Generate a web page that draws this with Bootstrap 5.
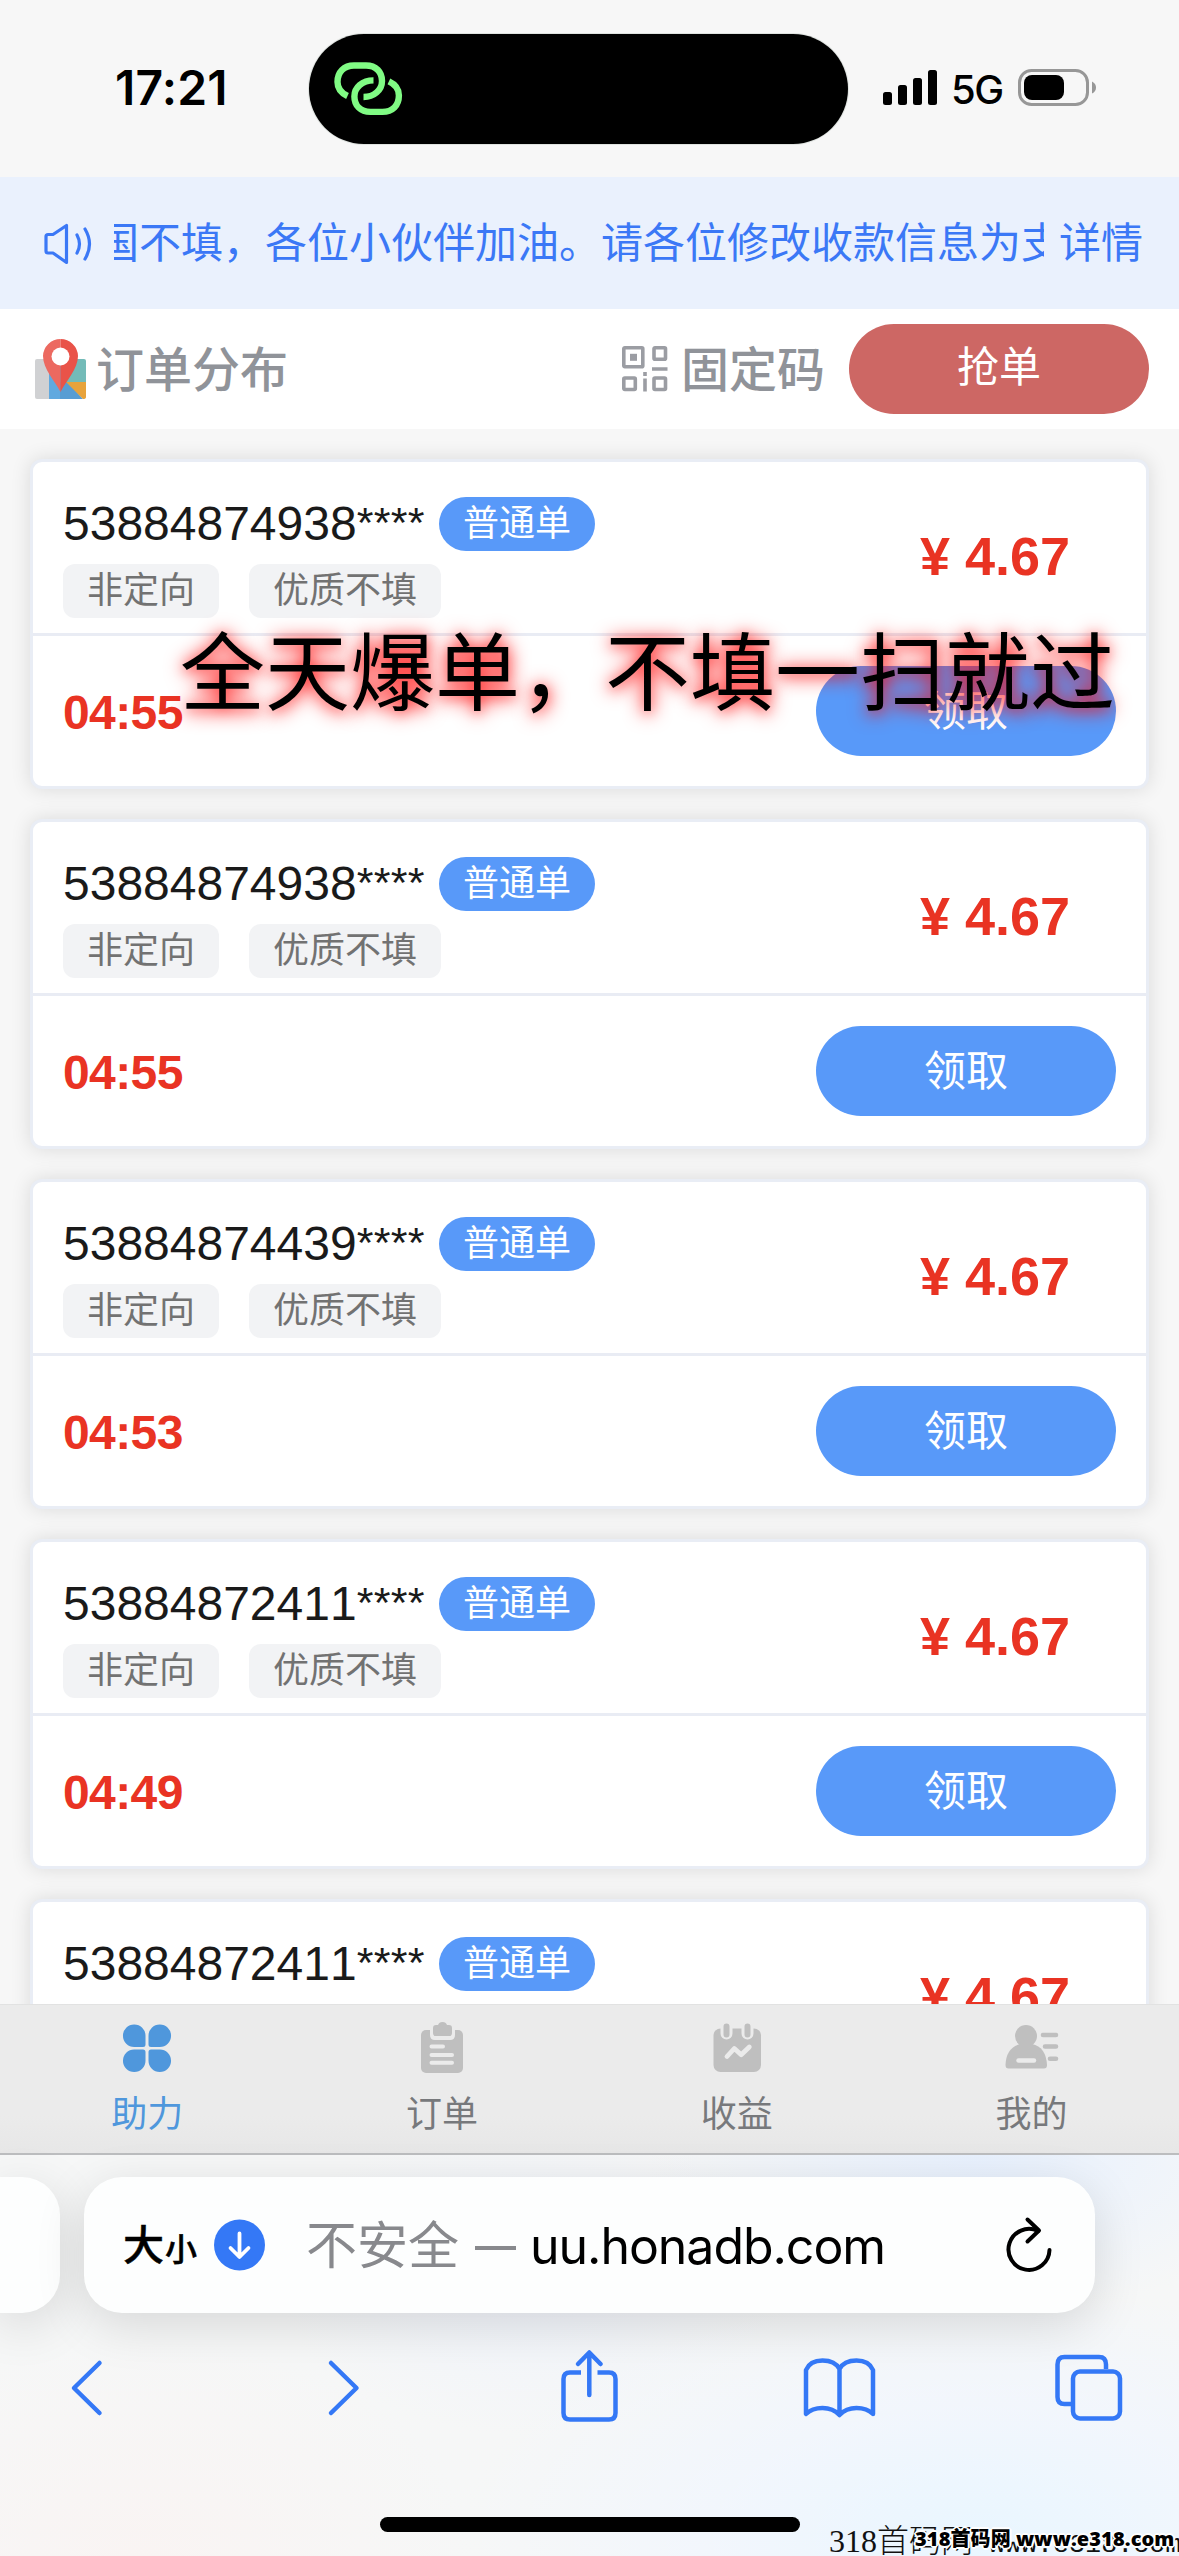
<!DOCTYPE html>
<html lang="zh-CN">
<head>
<meta charset="utf-8">
<meta name="viewport" content="width=device-width, initial-scale=1">
<title>订单分布</title>
<link href="https://cdn.jsdelivr.net/npm/bootstrap@5.3.0/dist/css/bootstrap.min.css" rel="stylesheet">
<style>
  body { background: #f7f7f7; font-family: "Liberation Sans", "Noto Sans CJK SC", sans-serif; color: #1a1a1a; }
  .screen { width: 1179px; height: 2556px; line-height: 1; white-space: nowrap; }
  svg { display: block; flex: none; }

  .status-bar { height: 177px; }
  .clock { left: 115px; top: 64px; font: 600 48px/1 Inter, sans-serif; letter-spacing: .2px; color: #000; }
  .island { left: 309px; top: 34px; width: 539px; height: 110px; border-radius: 55px; background: #000; box-shadow: 0 0 0 1px #dfe3e0; }
  .island svg { margin: 16px 0 0 11px; }
  .signal { left: 883px; top: 60px; }
  .network { left: 951px; top: 70px; font: 500 40px/1 Inter, sans-serif; letter-spacing: -1.5px; color: #000; }

  .notice { height: 132px; background: #eaf1fd; color: #3b78f6; font-size: 42px; padding: 2px 36px 0 41px; }
  .ticker { width: 930px; height: 60px; margin-left: 20px; line-height: 60px; }
  .ticker span { margin-left: -17px; }
  .notice-more { margin-left: 15px; }

  .head { height: 120px; padding: 0 30px 0 35px; color: #909399; font-size: 48px; font-weight: 500; }
  .head span { padding: 3px 0 0 2px; }
  .pill-btn { width: 300px; height: 90px; border: 0; border-radius: 45px; font-size: 42px; line-height: 1; padding: 0 0 2px; color: #fff; }
  .grab { background: #cd6764; }
  .take { background: #5899f9; padding: 2px 0 0; }

  .orders { padding: 30px 30px 0; }
  .order { height: 330px; border: 3px solid #e9edf5; border-radius: 12px; box-shadow: 0 0 20px rgba(0,0,0,.12); margin-bottom: 30px; }
  .order-top { height: 174px; border-bottom: 3px solid #e9ecf4; padding: 35px 0 0 30px; }
  .order-no { font-size: 48px; width: 361px; height: 54px; line-height: 54px; font-kerning: none; }
  .order-no i { font-style: normal; font-size: 43px; line-height: 1; letter-spacing: .3px; vertical-align: 3px; }
  .kind { height: 54px; line-height: 54px; padding: 0 24px; border-radius: 27px; background: #5899f9; color: #fff; font-size: 36px; margin-left: 15px; }
  .tag-row { gap: 30px; margin-top: 13px; }
  .tag { height: 54px; line-height: 54px; padding: 0 24px; border-radius: 12px; background: #f2f3f5; color: #727272; font-size: 36px; }
  .price { width: 302px; margin-top: 32px; font-size: 54px; font-weight: 700; color: #e93323; }
  .order-bottom { height: 150px; padding: 0 30px; }
  .timer { font-size: 48px; font-weight: 700; color: #e93323; letter-spacing: -.6px; padding-top: 4px; }
  .danmaku { left: 180px; top: 624px; font-size: 85px; color: #000; text-shadow: 0 2px 20px #f00, 0 2px 12px rgba(255,0,0,.35); z-index: 3; font-family: "Noto Sans CJK SC", sans-serif; }

  .tabs { height: 149px; background: linear-gradient(#ebebeb 75%, #e7e7e7); border-top: 1px solid #e2e2e2; color: #77797c; font-size: 36px; }
  .tabs > div { padding-top: 13px; }
  .tabs span { margin-top: 19px; }
  .tabs .current { color: #4f97dc; }

  .browser { height: 403px; border-top: 2px solid #bcbdbf;
    background: radial-gradient(520px 260px at 83% 96%, #e9f6ff, rgba(240,246,255,.7) 50%, transparent),
      radial-gradient(330px 160px at 83% 0, #e8f1fe, transparent),
      radial-gradient(260px 160px at 45% 30%, #f0f4fb, transparent),
      radial-gradient(330px 220px at 12% 100%, #f9f4f3, transparent), #f6f7f7; }
  .address-row { margin-top: 22px; gap: 24px; }
  .prev-page { width: 60px; height: 136px; border-radius: 0 38px 38px 0; }
  .address { width: 1011px; height: 136px; border-radius: 38px; padding: 0 42px 0 39px; color: #000; }
  .prev-page, .address { background: #fdfefe; box-shadow: 0 12px 50px rgba(0,0,0,.13); }
  .big { font-size: 41px; font-weight: 500; -webkit-text-stroke: .5px #000; margin-top: 3px; }
  .little { font-size: 32px; font-weight: 500; -webkit-text-stroke: .5px #000; margin: 9px 0 0 1px; }
  .download { margin-left: 17px; }
  .unsafe { font-size: 51px; color: #88898d; margin: 3px 0 0 41px; }
  .dash { width: 41px; height: 4px; background: #88898d; margin: 5px 14px 0 16px; }
  .domain { font: 400 50px/1 Inter, sans-serif; letter-spacing: -1.05px; padding-top: 2px; }
  .nav-icons { margin-top: 35px; padding: 0 50px 0 47px; color: #3478f6; }
  .home-line { width: 420px; height: 15px; border-radius: 8px; background: #000; margin: 89px auto 0; }

  .stamp-thin { left: 829px; top: 2525px; font: 300 32px/32px "Liberation Serif", "Noto Sans CJK SC", serif; color: #111; }
  .stamp-thin .mono { font-family: "Liberation Mono", monospace; font-size: 26.7px; }
  .stamp-bold { left: 915px; top: 2529px; font: 900 20px/20px "Open Sans", "Noto Sans CJK SC", sans-serif; color: #000; z-index: 5; letter-spacing: .1px;
    text-shadow: 2px 0 #fff, -2px 0 #fff, 0 2px #fff, 0 -2px #fff, 1px 1px #fff, -1px -1px #fff, 1px -1px #fff, -1px 1px #fff; }
</style>
<script src="https://cdn.jsdelivr.net/npm/bootstrap@5.3.0/dist/js/bootstrap.bundle.min.js"></script>
</head>
<body>
<div class="screen position-relative overflow-hidden d-flex flex-column">

  <header class="status-bar flex-shrink-0">
    <div class="clock position-absolute">17:21</div>
    <div class="island position-absolute">
      <svg width="100" height="76" viewBox="0 0 100 76" fill="none" stroke="#80fb84" stroke-width="6.4">
        <path d="M27.500 46C20 42.500 17.500 37 17.500 32C17.500 22 24 15.500 34 15.500H46C56 15.500 62 22 62 31C62 40 54 47 43.500 47"/>
        <path d="M68.900 31.400C76.400 34.900 78.900 40.400 78.900 45.400C78.900 55.400 72.400 61.900 62.400 61.900H50.400C40.400 61.900 34.400 55.400 34.400 46.400C34.400 37.400 42.400 30.400 53.500 30.400"/>
      </svg>
    </div>
    <svg class="signal position-absolute" width="216" height="56" viewBox="0 0 216 56">
      <rect x="0" y="32" width="9" height="13" rx="2.500"/><rect x="15" y="25" width="9" height="20" rx="2.500"/><rect x="30" y="18" width="9" height="27" rx="2.500"/><rect x="45" y="10" width="9" height="35" rx="2.500"/>
      <rect x="136.500" y="10.500" width="68" height="34" rx="12" fill="none" stroke="#979797" stroke-width="3"/>
      <rect x="141" y="15" width="40" height="25" rx="8"/>
      <path d="M209 21.500q4 2 4 6t-4 6z" fill="#979797"/>
    </svg>
    <div class="network position-absolute">5G</div>
  </header>

  <div class="notice d-flex align-items-center flex-shrink-0">
    <svg width="53" height="46" viewBox="0 0 53 46" fill="none" stroke="#3b78f6" stroke-width="3.200" stroke-linejoin="round" stroke-linecap="round">
      <path d="M5 15.500Q5 13.500 7 13.500H12L25.500 4.500V41.500L12 32H7Q5 32 5 30Z"/><path d="M36 14q5 9 0 18M44 8q9 15 0 30"/>
    </svg>
    <div class="ticker overflow-hidden"><span>国不填，各位小伙伴加油。请各位修改收款信息为支付宝</span></div>
    <span class="notice-more">详情</span>
  </div>

  <div class="head bg-white d-flex align-items-center flex-shrink-0">
    <svg width="51" height="62" viewBox="0 0 51 62">
      <path d="M2 21H14V61H2Q0 61 0 59V23Q0 21 2 21Z" fill="#d0d1d3"/>
      <path d="M14 21H32V61H14Z" fill="#61a9df"/><path d="M25 61V44L31 42L48 61Z" fill="#589dd3"/>
      <path d="M36 21H49Q51 21 51 23V44H30Z" fill="#73bbb8"/><path d="M31 44H51V59Q51 61 48 61Z" fill="#e8a33b"/>
      <path d="M25.500 54C20 43 8 31 8 18A17.500 17.500 0 0 1 25.500 1Z" fill="#ec6960"/>
      <path d="M25.500 54C31 43 43 31 43 18A17.500 17.500 0 0 0 25.500 1Z" fill="#e95349"/>
      <circle cx="25.500" cy="18.500" r="9" fill="#fff"/>
    </svg>
    <span class="ms-2">订单分布</span>
    <svg class="ms-auto" width="48" height="48" viewBox="0 0 48 48" fill="none" stroke="#9b9da3" stroke-width="3.600">
      <rect x="2.800" y="2.800" width="19" height="19" rx="1"/><rect x="33" y="2.800" width="11.500" height="11.500" rx="1"/><rect x="2.800" y="33" width="11.500" height="11.500" rx="1"/><rect x="33" y="33" width="11.500" height="11.500" rx="1"/>
      <path d="M9 12.300h7" stroke-width="7"/><path d="M31 24h15.500M24 27v4M24 33.500v13"/>
    </svg>
    <span class="ms-2 ps-1">固定码</span>
    <button class="btn pill-btn grab ms-4">抢单</button>
  </div>

  <main class="orders flex-grow-1 overflow-hidden">
    <section class="order bg-white">
      <div class="order-top d-flex justify-content-between">
        <div>
          <div class="d-flex"><span class="order-no">53884874938<i>****</i></span><span class="kind">普通单</span></div>
          <div class="tag-row d-flex"><span class="tag">非定向</span><span class="tag">优质不填</span></div>
        </div>
        <div class="price text-center">¥ 4.67</div>
      </div>
      <div class="order-bottom d-flex align-items-center justify-content-between"><span class="timer">04:55</span><button class="btn pill-btn take">领取</button></div>
    </section>
    <section class="order bg-white">
      <div class="order-top d-flex justify-content-between">
        <div>
          <div class="d-flex"><span class="order-no">53884874938<i>****</i></span><span class="kind">普通单</span></div>
          <div class="tag-row d-flex"><span class="tag">非定向</span><span class="tag">优质不填</span></div>
        </div>
        <div class="price text-center">¥ 4.67</div>
      </div>
      <div class="order-bottom d-flex align-items-center justify-content-between"><span class="timer">04:55</span><button class="btn pill-btn take">领取</button></div>
    </section>
    <section class="order bg-white">
      <div class="order-top d-flex justify-content-between">
        <div>
          <div class="d-flex"><span class="order-no">53884874439<i>****</i></span><span class="kind">普通单</span></div>
          <div class="tag-row d-flex"><span class="tag">非定向</span><span class="tag">优质不填</span></div>
        </div>
        <div class="price text-center">¥ 4.67</div>
      </div>
      <div class="order-bottom d-flex align-items-center justify-content-between"><span class="timer">04:53</span><button class="btn pill-btn take">领取</button></div>
    </section>
    <section class="order bg-white">
      <div class="order-top d-flex justify-content-between">
        <div>
          <div class="d-flex"><span class="order-no">53884872411<i>****</i></span><span class="kind">普通单</span></div>
          <div class="tag-row d-flex"><span class="tag">非定向</span><span class="tag">优质不填</span></div>
        </div>
        <div class="price text-center">¥ 4.67</div>
      </div>
      <div class="order-bottom d-flex align-items-center justify-content-between"><span class="timer">04:49</span><button class="btn pill-btn take">领取</button></div>
    </section>
    <section class="order bg-white">
      <div class="order-top d-flex justify-content-between">
        <div class="d-flex"><span class="order-no">53884872411<i>****</i></span><span class="kind">普通单</span></div>
        <div class="price text-center">¥ 4.67</div>
      </div>
    </section>
  </main>
  <div class="danmaku position-absolute">全天爆单，不填一扫就过</div>

  <nav class="tabs d-flex flex-shrink-0 text-center">
    <div class="current flex-fill w-25 d-flex flex-column align-items-center">
      <svg width="60" height="60" viewBox="0 0 60 60" fill="#4f97dc"><path d="M17.200 6.500A11.200 11.200 0 0 1 28.500 17.700V26.500Q28.500 29 26 29H17.200A11.200 11.200 0 0 1 17.200 6.500Z"/><path d="M42.800 6.500A11.200 11.200 0 0 0 31.500 17.700V26.500Q31.500 29 34 29H42.800A11.200 11.200 0 0 0 42.800 6.500Z"/><path d="M17.200 54A11.200 11.200 0 0 0 28.500 42.800V34Q28.500 31.500 26 31.500H17.200A11.200 11.200 0 0 0 17.200 54Z"/><path d="M42.800 54A11.200 11.200 0 0 1 31.500 42.800V34Q31.500 31.500 34 31.500H42.800A11.200 11.200 0 0 1 42.800 54Z"/></svg>
      <span>助力</span>
    </div>
    <div class="flex-fill w-25 d-flex flex-column align-items-center">
      <svg width="60" height="60" viewBox="0 0 60 60" fill="#bfbfbf"><rect x="9" y="12" width="42" height="43" rx="5"/><path d="M20 9V17Q20 20 23 20H38Q41 20 41 17V9" stroke="#ebebeb" stroke-width="4"/><path d="M21 10Q21 7 24 7H26Q27 4 30.500 4T35 7H37Q40 7 40 10V15Q40 18 37 18H24Q21 18 21 15Z"/><path d="M19.500 28.500H31M19.500 37H40M19.500 44.700H40" stroke="#ebebeb" stroke-width="4" stroke-linecap="round"/></svg>
      <span>订单</span>
    </div>
    <div class="flex-fill w-25 d-flex flex-column align-items-center">
      <svg width="60" height="60" viewBox="0 0 60 60" fill="none" stroke-linecap="round" stroke-linejoin="round"><rect x="6.500" y="10.500" width="47.500" height="43.500" rx="7" fill="#bfbfbf"/><path d="M19.500 7V15.500M40.500 7V15.500" stroke="#ebebeb" stroke-width="12"/><path d="M19.500 8.500V16.500M40.500 8.500V16.500" stroke="#bfbfbf" stroke-width="6"/><path d="M20 38.500L27.300 30.500L34.200 36.700L42.300 29" stroke="#ebebeb" stroke-width="4.800"/></svg>
      <span>收益</span>
    </div>
    <div class="flex-fill w-25 d-flex flex-column align-items-center">
      <svg width="60" height="60" viewBox="0 0 60 60" fill="#bfbfbf"><circle cx="24" cy="18" r="11"/><path d="M18 26H30Q44 29 45 47Q45 50.500 42 50.500H6.500Q3.500 50.500 3.500 47Q4 30 18 26Z"/><path d="M41 17H54M43 28.500H54M48 40.700H54" stroke="#bfbfbf" stroke-width="4.600" stroke-linecap="round"/><path d="M16.500 42.500H32" stroke="#ebebeb" stroke-width="4.400" stroke-linecap="round"/></svg>
      <span>我的</span>
    </div>
  </nav>

  <footer class="browser flex-shrink-0">
    <div class="address-row d-flex">
      <div class="prev-page flex-shrink-0"></div>
      <div class="address d-flex align-items-center flex-shrink-0">
        <span class="big">大</span><span class="little">小</span>
        <svg class="download" width="51" height="52" viewBox="0 0 51 51"><circle cx="25.500" cy="25.500" r="25.500" fill="#3478f6"/><path d="M25.500 14V37M16.500 28.500L25.500 37.500L34.500 28.500" fill="none" stroke="#fff" stroke-width="3.800" stroke-linecap="round" stroke-linejoin="round"/></svg>
        <span class="unsafe">不安全</span><span class="dash"></span><span class="domain">uu.honadb.com</span>
        <svg class="ms-auto" width="50" height="60" viewBox="0 0 50 60" fill="none" stroke="#000" stroke-width="4" stroke-linecap="round" stroke-linejoin="round"><path d="M46.500 35A20.500 20.500 0 1 1 35 16"/><path d="M24.500 4.500L36 15.500L24.500 26.500"/></svg>
      </div>
    </div>
    <div class="nav-icons d-flex justify-content-between">
      <svg width="80" height="80" viewBox="0 0 80 80" fill="none" stroke="currentColor" stroke-width="4.500" stroke-linecap="round" stroke-linejoin="round"><path d="M52.500 15L27 40L52.500 65"/></svg>
      <svg width="80" height="80" viewBox="0 0 80 80" fill="none" stroke="currentColor" stroke-width="4.500" stroke-linecap="round" stroke-linejoin="round"><path d="M33 15L58.500 40L33 65"/></svg>
      <svg width="80" height="80" viewBox="0 0 80 80" fill="none" stroke="currentColor" stroke-width="4.500" stroke-linejoin="round"><path d="M33 24.500H22Q15.500 24.500 15.500 31V65Q15.500 71.500 22 71.500H61Q67.500 71.500 67.500 65V31Q67.500 24.500 61 24.500H49.500"/><path d="M41.300 47V5M30 16L41.300 4.500L52.600 16" stroke-linecap="round"/></svg>
      <svg width="80" height="80" viewBox="0 0 80 80" fill="none" stroke="currentColor" stroke-width="4.500" stroke-linejoin="round"><path d="M7 22Q11 12.500 23.500 12.500Q36 12.500 40.500 21Q45 12.500 57.500 12.500Q70 12.500 74 22V66Q68 60 57.500 60Q47 60 40.500 67Q34 60 23.500 60Q13 60 7 66ZM40.500 21V66"/></svg>
      <svg width="80" height="80" viewBox="0 0 80 80" fill="none" stroke="currentColor" stroke-width="4.500"><path d="M57 21V16.500Q57 9 50 9H15.500Q8.500 9 8.500 16.500V49Q8.500 56 15.500 56H23"/><rect x="24" y="23.500" width="47" height="47" rx="7"/></svg>
    </div>
    <div class="home-line"></div>
  </footer>

  <div class="stamp-thin position-absolute">318首码网<span class="mono"> www.e318.com</span></div>
  <div class="stamp-bold position-absolute">318首码网 www.e318.com</div>
</div>
</body>
</html>
